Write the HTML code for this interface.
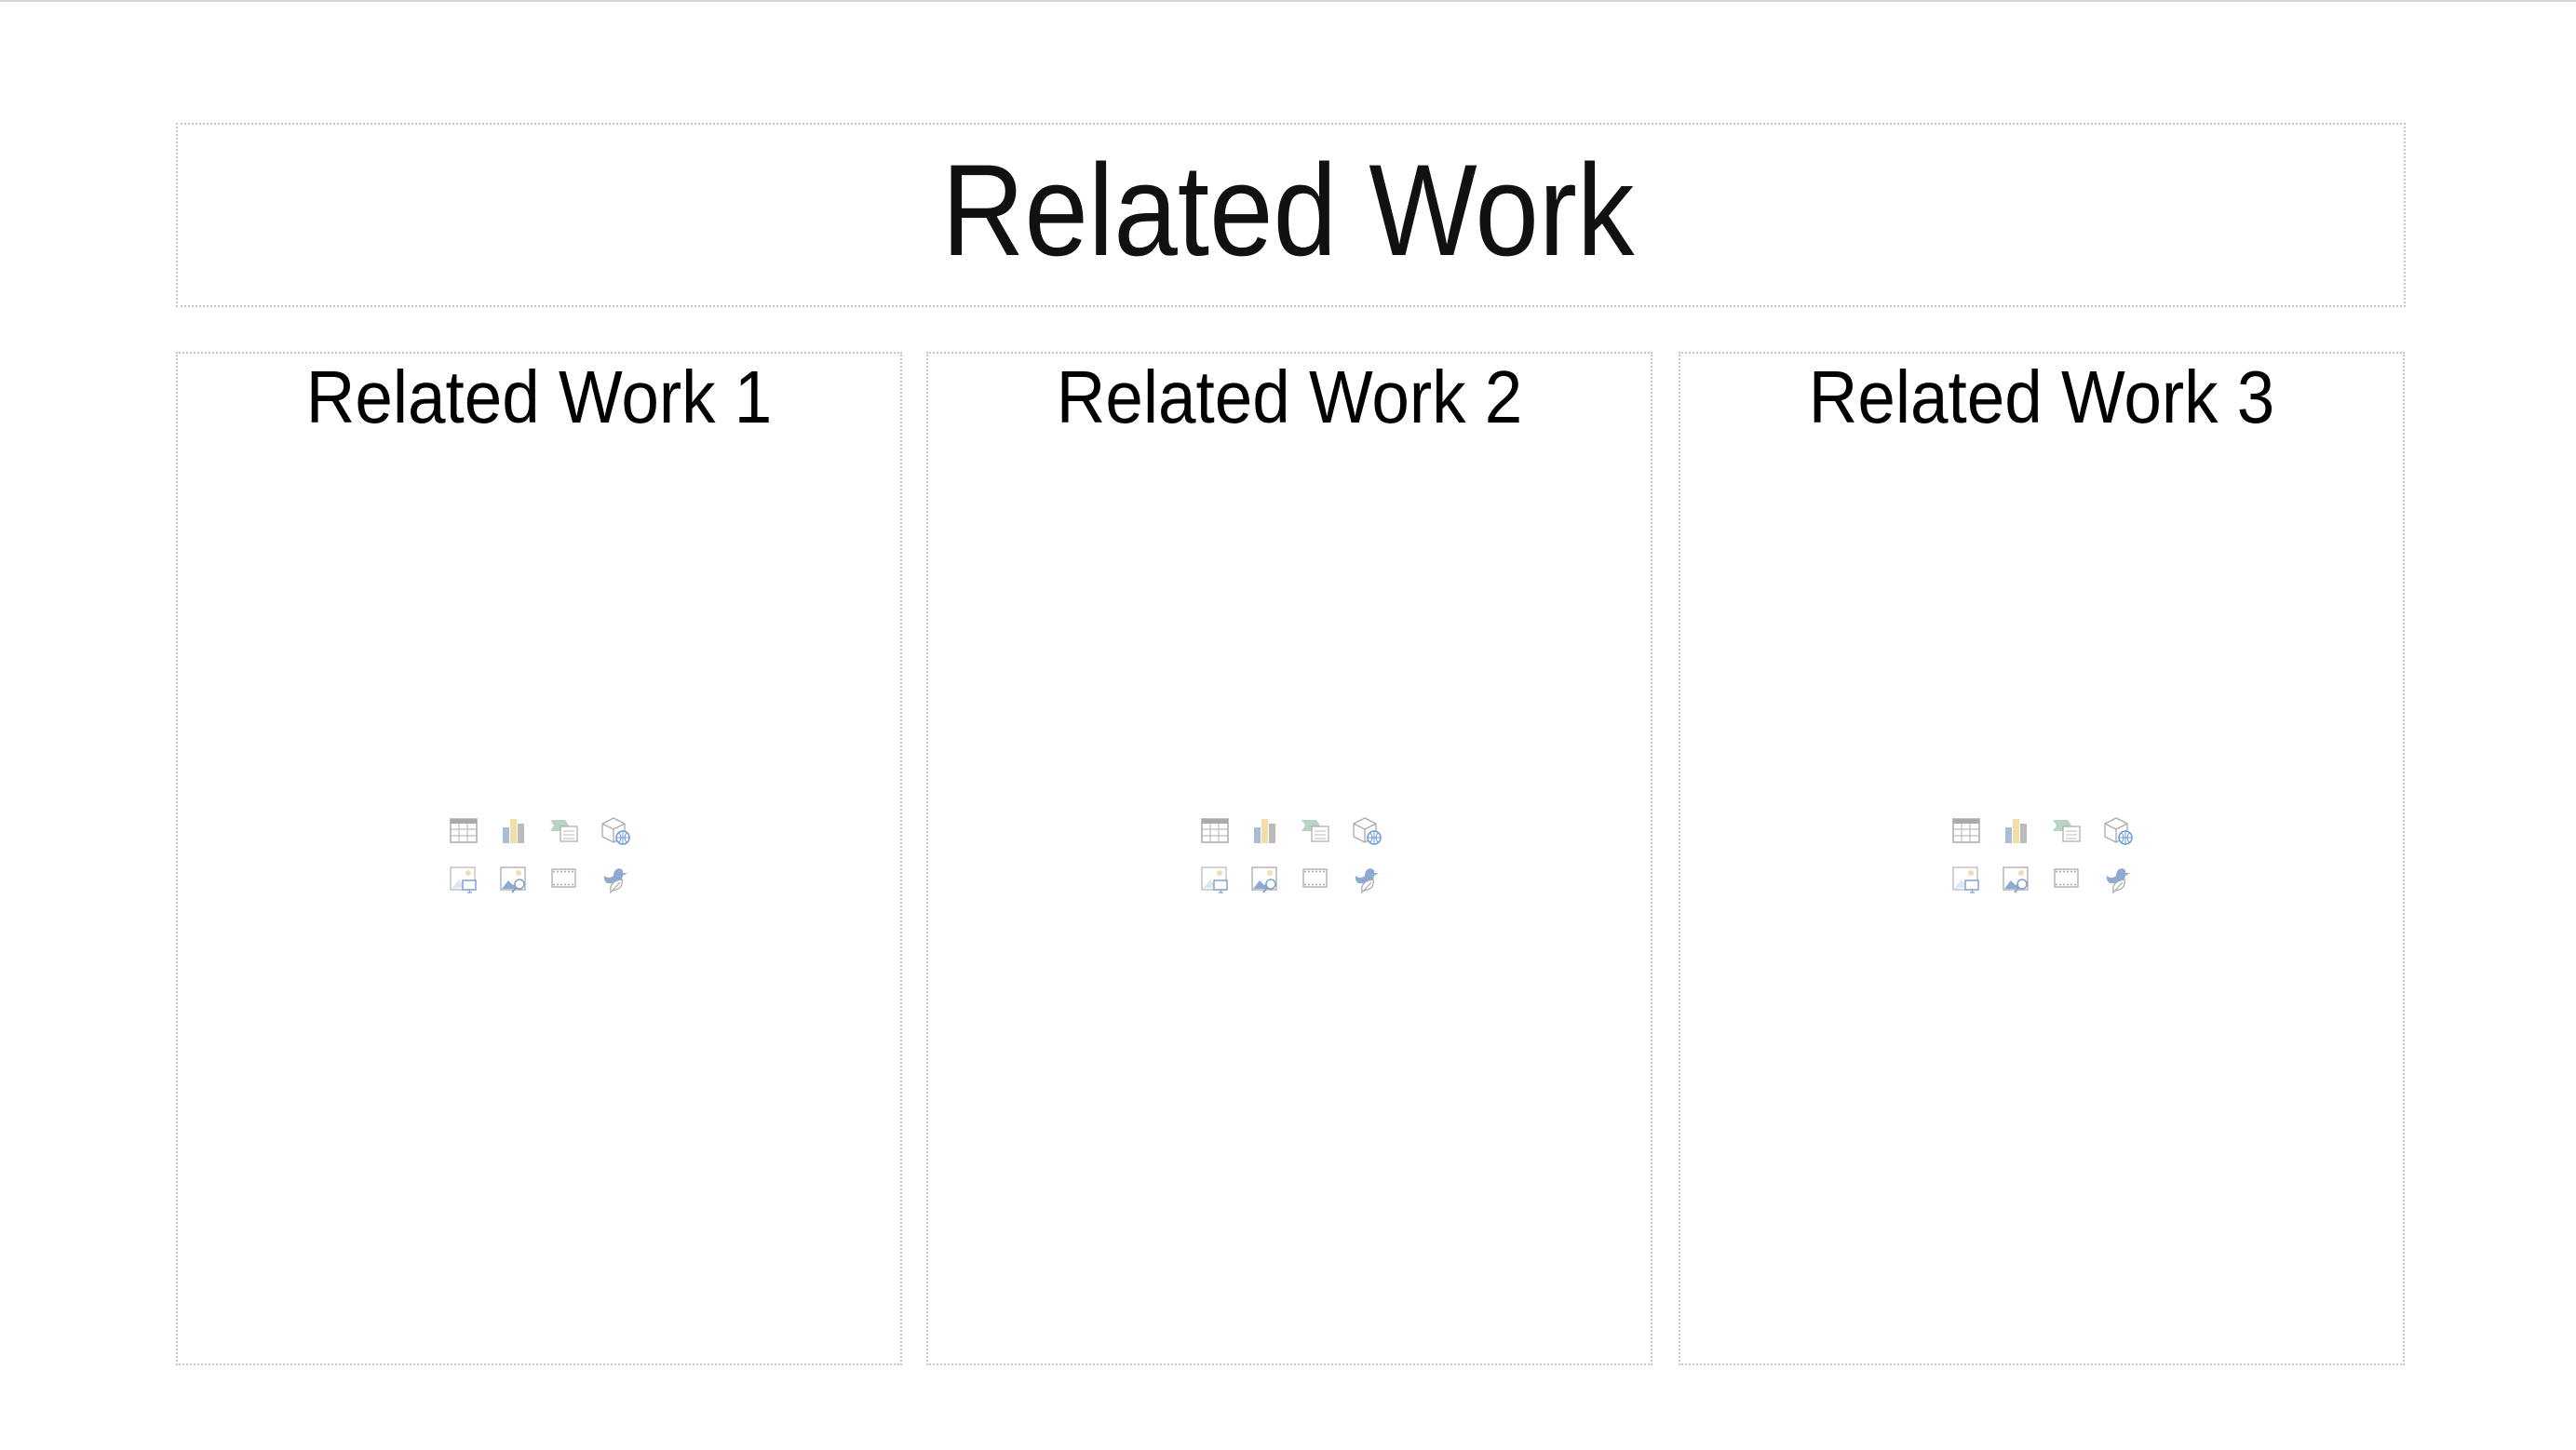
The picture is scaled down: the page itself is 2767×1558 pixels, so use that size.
<!DOCTYPE html>
<html><head><meta charset="utf-8"><style>
html,body{margin:0;padding:0;background:#fff;}
body{width:2767px;height:1558px;position:relative;overflow:hidden;font-family:"Liberation Sans",sans-serif;}
.topline{position:absolute;left:0;top:0;width:2767px;height:2px;background:#d4d4d4;}
.box{position:absolute;border:2px dotted #c6c6c6;box-sizing:border-box;}
.t{position:absolute;white-space:nowrap;color:#000;transform-origin:center center;}
</style></head><body>
<div class="topline"></div>
<div class="box" style="left:189px;top:132px;width:2395px;height:198px;"></div>
<div class="t" style="left:0;width:2767px;text-align:center;top:146px;font-size:140px;line-height:160px;color:#111;transform:scaleX(0.88);">Related Work</div>

<div class="box" style="left:189px;top:378px;width:780px;height:1089px;"></div>
<div class="box" style="left:995px;top:378px;width:780px;height:1089px;"></div>
<div class="box" style="left:1803px;top:378px;width:780px;height:1089px;"></div>

<div class="t" style="left:189px;width:780px;text-align:center;top:379px;font-size:80px;line-height:96px;transform:scaleX(0.91);">Related Work 1</div>
<div class="t" style="left:995px;width:780px;text-align:center;top:379px;font-size:80px;line-height:96px;transform:scaleX(0.91);">Related Work 2</div>
<div class="t" style="left:1803px;width:780px;text-align:center;top:379px;font-size:80px;line-height:96px;transform:scaleX(0.91);">Related Work 3</div>

<svg width="0" height="0" style="position:absolute">
<defs>
<g id="icons">
 <g transform="translate(0,0)">
  <rect x="1" y="2" width="28" height="25" fill="#fff" stroke="#aaa" stroke-width="1.5"/>
  <rect x="1" y="2" width="28" height="5" fill="#aaa"/>
  <path d="M1 13H29M1 20H29M10 7V27M19 7V27" stroke="#bbb" stroke-width="1.2"/>
 </g>
 <g transform="translate(54,0)">
  <rect x="3" y="11" width="7" height="17" fill="#a9bcd8"/>
  <rect x="11" y="2" width="7" height="26" fill="#f1dea9"/>
  <rect x="19" y="7" width="7" height="21" fill="#bbb"/>
 </g>
 <g transform="translate(108,0)">
  <path d="M0 3H16L20 9L16 15H0L4 9Z" fill="#b9d3c5"/>
  <rect x="11" y="10" width="18" height="16" fill="#fff" stroke="#aaa" stroke-width="1.2"/>
  <path d="M14 15H26M14 19H26M14 23H26" stroke="#bbb" stroke-width="1"/>
 </g>
 <g transform="translate(163,0)">
  <path d="M13 1L25 7V21L13 27L1 21V7Z M1 7L13 13L25 7M13 13V27" fill="none" stroke="#aaa" stroke-width="1.3"/>
  <circle cx="23" cy="22" r="7" fill="#fff" stroke="#6b9ad6" stroke-width="1.5"/>
  <path d="M16 22H30M23 15V29M19 17Q23 22 19 27M27 17Q23 22 27 27" fill="none" stroke="#6b9ad6" stroke-width="1"/>
 </g>
 <g transform="translate(0,53)">
  <rect x="1" y="1" width="26" height="24" fill="#fff" stroke="#bbb" stroke-width="1.3"/>
  <circle cx="20" cy="7" r="3" fill="#f3dcb4"/>
  <path d="M2 24L10 14L17 22" fill="#dde7f1"/>
  <rect x="14" y="15" width="14" height="10" fill="#fff" stroke="#7fa3d0" stroke-width="1.5"/>
  <path d="M19 28H24M21.5 25V28" stroke="#7fa3d0" stroke-width="1.3"/>
 </g>
 <g transform="translate(54,53)">
  <rect x="1" y="1" width="26" height="24" fill="#fff" stroke="#aaa" stroke-width="1.3"/>
  <circle cx="20" cy="7" r="3" fill="#f3dcb4"/>
  <path d="M2 24L9 15L14 20L18 17V24Z" fill="#8eaad3"/>
  <circle cx="21" cy="19" r="5" fill="#fff" stroke="#7fa3d0" stroke-width="1.5"/>
  <path d="M17 23L13 28" stroke="#7fa3d0" stroke-width="2"/>
 </g>
 <g transform="translate(108,53)">
  <rect x="2" y="3" width="25" height="19" fill="#fff" stroke="#aaa" stroke-width="1.3"/>
  <path d="M3 5.5H26M3 19.5H26" stroke="#aaa" stroke-width="1.5" stroke-dasharray="2 2"/>
 </g>
 <g transform="translate(163,53)">
  <path d="M3 10Q8 14 13 10Q13 3 19 2Q24 3 23 7L28 7L23 10Q22 16 16 18L6 18Q2 15 3 10Z" fill="#8eaad3"/>
  <path d="M10 27Q8 16 22 14Q24 24 12 26" fill="#fff" stroke="#aaa" stroke-width="1.3"/>
  <path d="M9 29L20 17" stroke="#aaa" stroke-width="1.2"/>
 </g>
</g>
</defs></svg>

<svg style="position:absolute;left:483px;top:878px" width="200" height="90"><use href="#icons"/></svg>
<svg style="position:absolute;left:1290px;top:878px" width="200" height="90"><use href="#icons"/></svg>
<svg style="position:absolute;left:2097px;top:878px" width="200" height="90"><use href="#icons"/></svg>
</body></html>
